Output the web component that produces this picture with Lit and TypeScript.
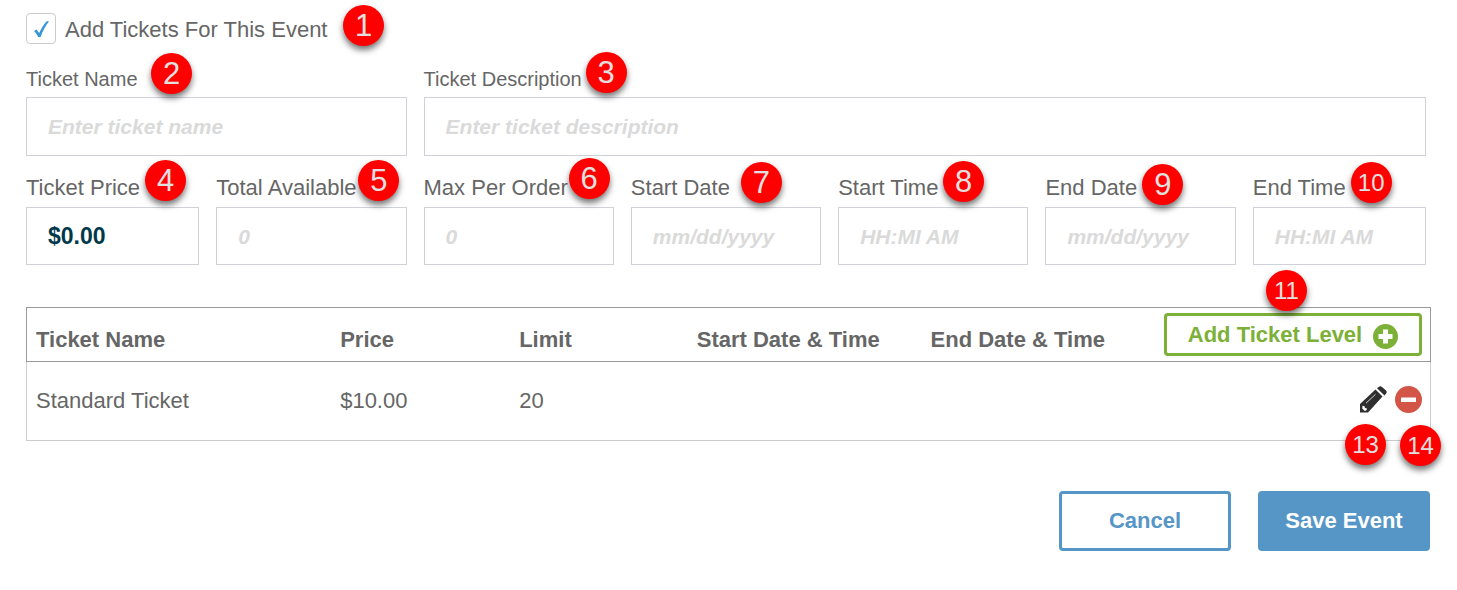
import { LitElement, html, css, svg } from "lit";
import { customElement, property } from "lit/decorators.js";

interface Field {
  id: string;
  label: string;
  placeholder: string;
  value?: string;
  kind?: string;
  badge: number;
  x: number;
  y: number;
}

// x and y are the callout's offset from the top left corner of its field.
const fields: Field[] = [
  { id: "name", label: "Ticket Name", placeholder: "Enter ticket name", kind: "name", badge: 2, x: 125, y: -13 },
  { id: "description", label: "Ticket Description", placeholder: "Enter ticket description", kind: "description", badge: 3, x: 162, y: -14 },
  { id: "price", label: "Ticket Price", placeholder: "$0.00", value: "$0.00", badge: 4, x: 119, y: -15 },
  { id: "total", label: "Total Available", placeholder: "0", badge: 5, x: 142, y: -15 },
  { id: "max", label: "Max Per Order", placeholder: "0", badge: 6, x: 145, y: -17 },
  { id: "start-date", label: "Start Date", placeholder: "mm/dd/yyyy", badge: 7, x: 110, y: -13 },
  { id: "start-time", label: "Start Time", placeholder: "HH:MI AM", badge: 8, x: 105, y: -14 },
  { id: "end-date", label: "End Date", placeholder: "mm/dd/yyyy", badge: 9, x: 97, y: -11 },
  { id: "end-time", label: "End Time", placeholder: "HH:MI AM", badge: 10, x: 98, y: -13 },
];

@customElement("step-badge")
export class StepBadge extends LitElement {
  @property({ type: Number }) step = 0;

  static styles = css`
    :host {
      display: block;
      position: absolute;
      z-index: 2;
      pointer-events: none;
    }
    .disc {
      display: flex;
      align-items: center;
      justify-content: center;
      width: 41px;
      height: 41px;
      border-radius: 50%;
      background: #f00;
      color: #e0e0e0;
      font-size: 31px;
      line-height: 40px;
      box-shadow: 0 4px 6px rgba(0, 0, 0, 0.55);
    }
    .wide {
      font-size: 24px;
    }
  `;

  render() {
    return html`<div class="disc ${this.step > 9 ? "wide" : ""}">${this.step}</div>`;
  }
}

const checkMark = svg`<path d="M0 10 2.500 8.400 5.200 12C7.500 7 9.800 3.200 12.600 .2L15 .2C11.600 4.600 8.800 9.600 6.600 16H4.200C3 13.500 1.700 11.600 0 10Z" fill="#3597d3"/>`;

const plusIcon = svg`<circle cx="12.500" cy="12.500" r="12.500" fill="#7cb036"/><path d="M12.500 5.500v14M5.500 12.500h14" stroke="#fff" stroke-width="5"/>`;

const minusIcon = svg`<circle cx="13.500" cy="13.500" r="13.500" fill="#d35547"/><rect x="6" y="11.500" width="15" height="4.500" rx=".5" fill="#fff"/>`;

const pencilIcon = svg`
  <path d="M0 26.500V18L15.500 3.500 22.500 10.500 8 26.500Z" fill="#2f2f2f"/>
  <path d="M17 2.200 19 .700Q20.500 -.500 22 1L26 4.500Q27.500 6 26.200 7.500L24.500 9.500Z" fill="#2f2f2f"/>
  <path d="M2.500 19.800 4.500 20.200 5 22 7 22.500 6.600 24.200 4.800 25 2.200 22.500Z" fill="#fff"/>
  <path d="M6 17.200 15.500 8.300" stroke="#fff" stroke-width=".8" fill="none"/>`;

@customElement("app-root")
export class AppRoot extends LitElement {
  static styles = css`
    :host {
      display: block;
      box-sizing: border-box;
      padding: 13px 26px 39px;
      background: #fff;
      color: #666;
      font-family: "Liberation Sans", Arial, sans-serif;
      font-size: 22px;
      line-height: 26px;
    }
    * {
      box-sizing: border-box;
    }
    .toggle {
      position: relative;
      display: flex;
      align-items: center;
      gap: 9px;
      width: fit-content;
      height: 31px;
    }
    .toggle label {
      padding-top: 2px;
    }
    .box {
      display: grid;
      width: 30px;
      height: 31px;
      place-items: center;
    }
    .box > * {
      grid-area: 1 / 1;
    }
    .box input {
      appearance: none;
      width: 100%;
      height: 100%;
      margin: 0;
      border: 1px solid #ccc;
      border-radius: 4px;
      background: #fff;
    }
    .box svg {
      z-index: 1;
      pointer-events: none;
      visibility: hidden;
    }
    .box input:checked + svg {
      visibility: visible;
    }
    .fields {
      display: grid;
      grid-template-columns: minmax(0, 173fr) repeat(5, minmax(0, 190fr)) minmax(0, 173fr);
      gap: 19px 17px;
      margin: 22px 5px 0 0;
    }
    .field {
      position: relative;
      display: flex;
      flex-direction: column;
      gap: 6px;
    }
    .field label {
      white-space: nowrap;
    }
    .name,
    .description {
      gap: 5px;
    }
    .name label,
    .description label {
      font-size: 20px;
    }
    .name {
      grid-column: span 2;
    }
    .description {
      grid-column: span 5;
    }
    .field input {
      width: 100%;
      height: 58px;
      padding: 0 21px;
      border: 1px solid #cfd2d8;
      border-radius: 0;
      background: #fff;
      color: #02394a;
      font: bold 23px "Liberation Sans", Arial, sans-serif;
    }
    .name input,
    .description input {
      height: 59px;
    }
    .field input::placeholder {
      color: #dadada;
      opacity: 1;
      font-size: 21px;
      font-style: italic;
    }
    .levels {
      position: relative;
      margin-top: 42px;
    }
    table {
      width: 100%;
      border-collapse: collapse;
      table-layout: fixed;
    }
    .c1 { width: 21.7%; }
    .c2 { width: 12.75%; }
    .c3 { width: 12.65%; }
    .c4 { width: 16.65%; }
    .c5 { width: 16%; }
    thead tr {
      height: 54px;
      border: 1px solid #999;
    }
    tbody tr {
      height: 79px;
      border: 1px solid #ccc;
    }
    th,
    td {
      padding: 0 9px;
      text-align: left;
      white-space: nowrap;
    }
    th {
      padding-top: 10px;
    }
    .actions {
      padding: 0 8px 0 0;
      text-align: right;
    }
    button {
      font: bold 22px/26px "Liberation Sans", Arial, sans-serif;
      cursor: pointer;
    }
    .add {
      display: inline-flex;
      align-items: center;
      justify-content: center;
      gap: 11px;
      width: 258px;
      height: 43px;
      padding: 0;
      border: 3px solid #7cb036;
      border-radius: 4px;
      background: #fff;
      color: #7cb036;
      vertical-align: middle;
    }
    .add svg {
      margin-top: 4px;
    }
    .tools {
      display: flex;
      justify-content: flex-end;
      gap: 8px;
      padding-bottom: 4px;
    }
    .icon {
      display: block;
      padding: 0;
      border: 0;
      background: none;
    }
    svg {
      display: block;
      overflow: visible;
    }
    .footer {
      display: flex;
      justify-content: flex-end;
      gap: 27px;
      margin: 50px 1px 0 0;
    }
    .cancel,
    .save {
      width: 172px;
      height: 60px;
      padding: 0;
      border: 3px solid #5696c6;
      border-radius: 4px;
    }
    .cancel {
      background: #fff;
      color: #5696c6;
    }
    .save {
      background: #5696c6;
      color: #fff;
    }
    .b1 { left: 317px; top: -8px; }
    .b11 { right: 124px; top: -37px; }
    .b13 { right: 45px; top: 117px; }
    .b14 { right: -10px; top: 118px; }
  `;

  private renderField(f: Field) {
    return html`
      <div class="field ${f.kind ?? ""}">
        <label for=${f.id}>${f.label}</label>
        <input id=${f.id} type="text" placeholder=${f.placeholder} .value=${f.value ?? ""} />
        <step-badge .step=${f.badge} style="left:${f.x}px;top:${f.y}px"></step-badge>
      </div>
    `;
  }

  render() {
    return html`
      <div class="toggle">
        <span class="box">
          <input id="has-tickets" type="checkbox" checked />
          <svg width="15" height="16" viewBox="0 0 15 16" aria-hidden="true">${checkMark}</svg>
        </span>
        <label for="has-tickets">Add Tickets For This Event</label>
        <step-badge class="b1" .step=${1}></step-badge>
      </div>

      <div class="fields">${fields.map((f) => this.renderField(f))}</div>

      <div class="levels">
        <table>
          <colgroup>
            <col class="c1" /><col class="c2" /><col class="c3" /><col class="c4" /><col class="c5" /><col />
          </colgroup>
          <thead>
            <tr>
              <th>Ticket Name</th>
              <th>Price</th>
              <th>Limit</th>
              <th>Start Date &amp; Time</th>
              <th>End Date &amp; Time</th>
              <th class="actions">
                <button class="add" type="button">
                  Add Ticket Level
                  <svg width="25" height="25" viewBox="0 0 25 25" aria-hidden="true">${plusIcon}</svg>
                </button>
              </th>
            </tr>
          </thead>
          <tbody>
            <tr>
              <td>Standard Ticket</td>
              <td>$10.00</td>
              <td>20</td>
              <td></td>
              <td></td>
              <td class="actions">
                <div class="tools">
                  <button class="icon" type="button" aria-label="Edit">
                    <svg width="27" height="27" viewBox="0 0 27 27">${pencilIcon}</svg>
                  </button>
                  <button class="icon" type="button" aria-label="Remove">
                    <svg width="27" height="27" viewBox="0 0 27 27">${minusIcon}</svg>
                  </button>
                </div>
              </td>
            </tr>
          </tbody>
        </table>
        <step-badge class="b11" .step=${11}></step-badge>
        <step-badge class="b13" .step=${13}></step-badge>
        <step-badge class="b14" .step=${14}></step-badge>
      </div>

      <div class="footer">
        <button class="cancel" type="button">Cancel</button>
        <button class="save" type="button">Save Event</button>
      </div>
    `;
  }
}
